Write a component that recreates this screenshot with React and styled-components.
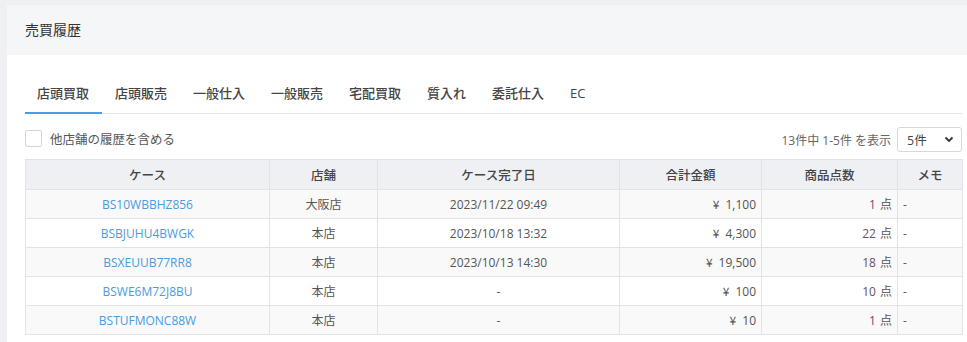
import React from "react";
import styled, { createGlobalStyle } from "styled-components";

const GlobalStyle = createGlobalStyle`
  body {
    margin: 0;
    background: #eff0f4;
    font-family: "Open Sans", "Noto Sans CJK JP", sans-serif;
    color: #555;
  }
`;

const rows = [
  { id: "BS10WBBHZ856", shop: "大阪店", date: "2023/11/22 09:49", amount: "1,100", count: 1 },
  { id: "BSBJUHU4BWGK", shop: "本店", date: "2023/10/18 13:32", amount: "4,300", count: 22 },
  { id: "BSXEUUB77RR8", shop: "本店", date: "2023/10/13 14:30", amount: "19,500", count: 18 },
  { id: "BSWE6M72J8BU", shop: "本店", date: "-", amount: "100", count: 10 },
  { id: "BSTUFMONC88W", shop: "本店", date: "-", amount: "10", count: 1 },
];

const tabs = ["店頭買取", "店頭販売", "一般仕入", "一般販売", "宅配買取", "質入れ", "委託仕入", "EC"];

export default function App() {
  return (
    <>
      <GlobalStyle />
      <Card>
        <CardHeader>売買履歴</CardHeader>
        <CardBody>
          <TabNav>
            {tabs.map((t, i) => (
              <Tab key={t} active={i === 0}>{t}</Tab>
            ))}
          </TabNav>
          <FilterRow>
            <CheckLabel>
              <CheckBox />
              他店舗の履歴を含める
            </CheckLabel>
            <Pager>
              13件中 1-5件 を表示
              <SelectBox>
                5件
                <svg width="10" height="7" viewBox="0 0 10 7">
                  <path d="M1.5 1.5 L5 5 L8.5 1.5" fill="none" stroke="#333" strokeWidth="1.8" />
                </svg>
              </SelectBox>
            </Pager>
          </FilterRow>
          <Table>
            <colgroup>
              <col style={{ width: 244 }} />
              <col style={{ width: 108 }} />
              <col style={{ width: 242 }} />
              <col style={{ width: 142 }} />
              <col style={{ width: 136 }} />
              <col style={{ width: 65 }} />
            </colgroup>
            <thead>
              <tr>
                <Th>ケース</Th>
                <Th>店舗</Th>
                <Th>ケース完了日</Th>
                <Th>合計金額</Th>
                <Th>商品点数</Th>
                <Th>メモ</Th>
              </tr>
            </thead>
            <tbody>
              {rows.map((r, i) => (
                <Tr key={r.id} odd={i % 2 === 0}>
                  <Td align="center"><CaseLink>{r.id}</CaseLink></Td>
                  <Td align="center">{r.shop}</Td>
                  <Td align="center">{r.date}</Td>
                  <Td align="right"><Yen>¥</Yen>{r.amount}</Td>
                  <Td align="right"><Count>{r.count}</Count><Unit>点</Unit></Td>
                  <Td align="left">-</Td>
                </Tr>
              ))}
            </tbody>
          </Table>
        </CardBody>
      </Card>
    </>
  );
}

const Card = styled.div`
  margin: 5px 0 0 7px;
  background: #fff;
  min-height: 337px;
`;

const CardHeader = styled.div`
  height: 50px;
  display: flex;
  align-items: center;
  padding: 0 0 2px 18px;
  box-sizing: border-box;
  background: #f5f6f8;
  font-size: 14px;
  color: #333;
`;

const CardBody = styled.div`
  padding: 22px 5px 0 18px;
`;

const TabNav = styled.div`
  display: flex;
  border-bottom: 1px solid #e4e5ea;
  height: 36px;
`;

const Tab = styled.div`
  padding: 0 13px 4px 12px;
  margin-right: 1px;
  display: flex;
  align-items: center;
  font-size: 13px;
  font-weight: 500;
  color: #444;
  margin-bottom: -1px;
  border-bottom: 2px solid ${(p) => (p.active ? "#4a9be8" : "transparent")};
`;

const FilterRow = styled.div`
  display: flex;
  justify-content: space-between;
  align-items: center;
  margin-top: 13px;
  height: 25px;
  margin-bottom: 7px;
`;

const CheckLabel = styled.label`
  display: flex;
  align-items: center;
  gap: 8px;
  font-size: 12.5px;
  color: #555;
  margin-top: -2px;
`;

const CheckBox = styled.span`
  width: 15px;
  height: 15px;
  border: 1px solid #d4d5da;
  border-radius: 2px;
  background: #fff;
`;

const Pager = styled.div`
  display: flex;
  align-items: center;
  gap: 6px;
  font-size: 12px;
  color: #666;
`;

const SelectBox = styled.div`
  border: 1px solid #d6d7dc;
  border-radius: 3px;
  display: flex;
  align-items: center;
  justify-content: space-between;
  padding: 0 7px 0 9px;
  box-sizing: border-box;
  width: 65px;
  height: 25px;
  font-size: 12.5px;
  color: #444;
`;

const Table = styled.table`
  width: 937px;
  border-collapse: collapse;
  table-layout: fixed;
  font-size: 12px;
`;

const Th = styled.th`
  height: 29px;
  background: #eff0f4;
  border: 1px solid #e2e3e9;
  font-weight: 500;
  color: #444;
  font-size: 12.5px;
  padding: 0;
`;

const Tr = styled.tr`
  background: ${(p) => (p.odd ? "#f9f9f9" : "#fff")};
`;

const Td = styled.td`
  height: 28px;
  border: 1px solid #e2e3e9;
  text-align: ${(p) => p.align};
  padding: 0 5px;
  color: #555;
`;

const CaseLink = styled.a`
  color: #4a9be0;
  text-decoration: none;
`;

const Yen = styled.span`
  font-family: "Noto Sans CJK JP", sans-serif;
  margin-right: 6px;
`;

const Count = styled.span`
  color: #6f4e68;
`;

const Unit = styled.span`
  margin-left: 4px;
`;
